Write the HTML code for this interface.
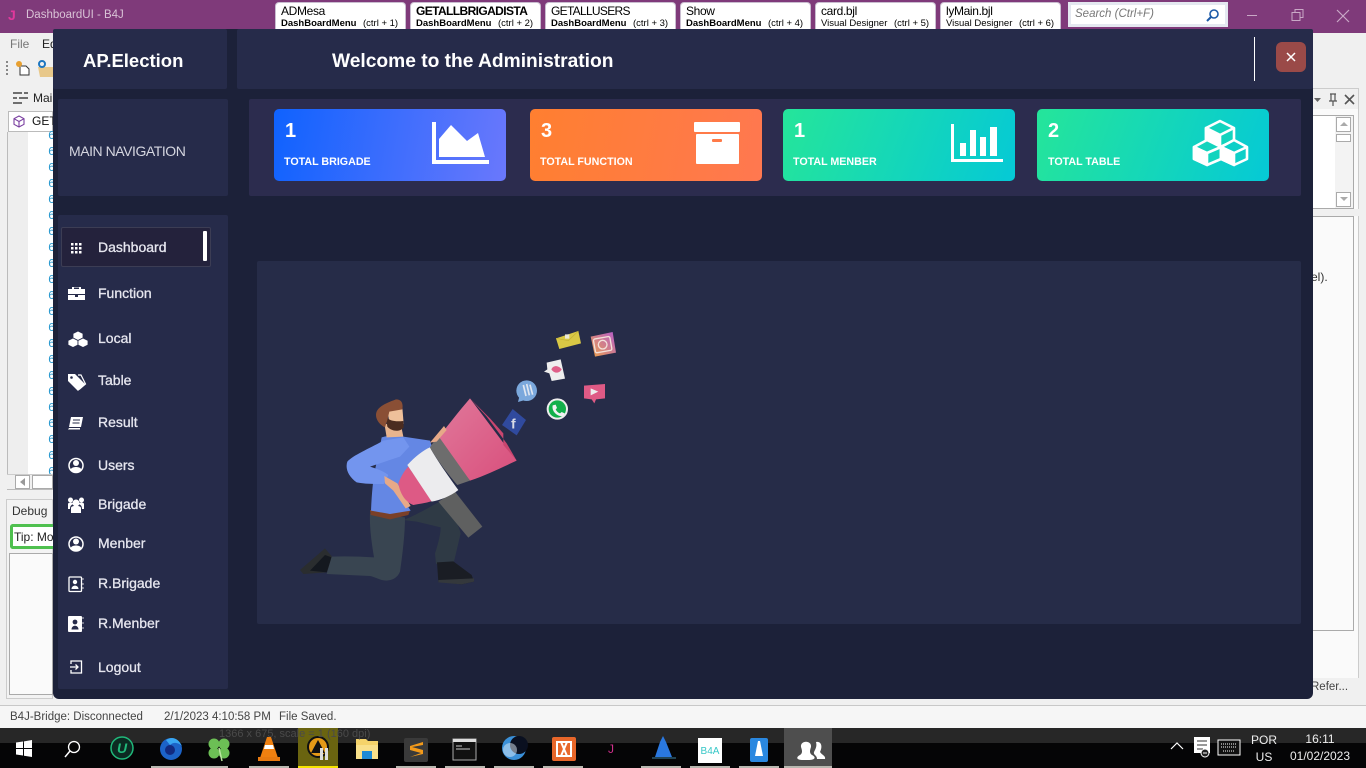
<!DOCTYPE html>
<html lang="en"><head><meta charset="utf-8"><title>DashboardUI - B4J</title>
<style>
html,body{margin:0;padding:0;width:1366px;height:768px;overflow:hidden;background:#f0f0f0;font-family:"Liberation Sans",sans-serif}
div,span,svg{position:absolute}
.t{white-space:nowrap;line-height:1}
.tab{background:#fff;border:1px solid #c9bdd0;border-bottom:0;border-radius:4px 4px 0 0;top:2px;height:27px;box-sizing:border-box;color:#000}
.tab b,.tab i{position:absolute;white-space:nowrap;font-style:normal;line-height:1}
.tab .a{left:5px;top:2px;font-size:12px;letter-spacing:-.35px}
.tab .b{left:5px;top:16px;font-size:9.5px;font-weight:bold}
.tab .c{top:16px;font-size:9.5px}
.p{background:#262b4a;border-radius:2px}
.card{top:109px;width:232px;height:72px;border-radius:5px}
.n{left:98px;color:#e6e6ef;font-size:14px;-webkit-text-stroke:.3px #e6e6ef}
.c1{left:10px;top:12px;font-size:20px;font-weight:bold;color:#fff}
.c2{left:10px;top:48px;font-size:10.7px;font-weight:bold;color:#fff}
.six{left:48px;color:#2a9ad0;font-size:12px;font-family:"Liberation Mono",monospace}
</style></head><body>

<!-- IDE background -->
<div style="left:0;top:0;width:1366px;height:33px;background:#7f3a7a"></div>
<div class="t" style="left:8px;top:8px;color:#e0389c;font-size:14px;font-weight:bold">J</div>
<div class="t" style="left:26px;top:10px;color:#d9c3d6;font-size:11.5px">DashboardUI - B4J</div>

<div class="tab" style="left:275px;width:131px"><i class="a">ADMesa</i><b class="b">DashBoardMenu</b><i class="c" style="left:87px">(ctrl + 1)</i></div>
<div class="tab" style="left:410px;width:131px"><b class="a" style="letter-spacing:-.6px">GETALLBRIGADISTA</b><b class="b">DashBoardMenu</b><i class="c" style="left:87px">(ctrl + 2)</i></div>
<div class="tab" style="left:545px;width:131px"><i class="a" style="letter-spacing:-.7px">GETALLUSERS</i><b class="b">DashBoardMenu</b><i class="c" style="left:87px">(ctrl + 3)</i></div>
<div class="tab" style="left:680px;width:131px"><i class="a">Show</i><b class="b">DashBoardMenu</b><i class="c" style="left:87px">(ctrl + 4)</i></div>
<div class="tab" style="left:815px;width:121px"><i class="a">card.bjl</i><i class="c" style="left:5px;top:16px">Visual Designer</i><i class="c" style="left:78px">(ctrl + 5)</i></div>
<div class="tab" style="left:940px;width:121px"><i class="a">lyMain.bjl</i><i class="c" style="left:5px;top:16px">Visual Designer</i><i class="c" style="left:78px">(ctrl + 6)</i></div>

<div style="left:1068px;top:2px;width:160px;height:25px;background:#fff;border:3px solid #e4e8f0;box-sizing:border-box"></div>
<div class="t" style="left:1075px;top:9px;font-size:11.5px;font-style:italic;color:#777">Search (Ctrl+F)</div>
<svg style="left:1205px;top:8px" width="15" height="15" viewBox="0 0 15 15"><circle cx="9" cy="6" r="4" fill="none" stroke="#1d5aa8" stroke-width="1.6"/><path d="M6 9L2 13" stroke="#1d5aa8" stroke-width="2"/></svg>
<svg style="left:1240px;top:6px" width="126" height="20" viewBox="0 0 126 20"><path d="M7 9.500H17" stroke="#c9a8c6"/><path d="M52 6.500H60V14.500H52ZM55 6.500V3.500H63V11.500H60" fill="none" stroke="#c9a8c6"/><path d="M97 4L109 16M109 4L97 16" stroke="#c9a8c6" stroke-width="1.2"/></svg>

<div class="t" style="left:10px;top:38px;font-size:12px;color:#777">File</div>
<div class="t" style="left:42px;top:38px;font-size:12px;color:#222">Ed</div>
<svg style="left:4px;top:58px" width="50" height="20" viewBox="0 0 50 20"><path d="M3 3V17" stroke="#888" stroke-width="2" stroke-dasharray="2 2"/><path d="M16 8H22L25 11V17H16Z" fill="#fff" stroke="#333"/><circle cx="15" cy="6" r="3" fill="#e8a030"/><path d="M34 9H50V19H36Z" fill="#e8c88a"/><circle cx="38" cy="6" r="3" fill="none" stroke="#1d76c0" stroke-width="2"/></svg>
<svg style="left:12px;top:91px" width="18" height="14" viewBox="0 0 18 14"><path d="M1 2H10M12 2H16M1 7H5M7 7H16M1 12H10" stroke="#444" stroke-width="1.4"/></svg>
<div class="t" style="left:33px;top:92px;font-size:12px;color:#222">Mai</div>
<div style="left:8px;top:111px;width:45px;height:21px;background:#fff;border:1px solid #bbb;box-sizing:border-box"></div>
<svg style="left:13px;top:115px" width="12" height="13" viewBox="0 0 12 13"><path d="M6 1L11 3.700V9.300L6 12L1 9.300V3.700ZM1 3.700L6 6.500L11 3.700M6 6.500V12" fill="none" stroke="#7a3fa0" stroke-width="1.100"/></svg>
<div class="t" style="left:32px;top:115px;font-size:12px;color:#111">GET</div>
<div style="left:8px;top:132px;width:20px;height:342px;background:#eee"></div>
<div style="left:28px;top:132px;width:25px;height:342px;background:#fff"></div>
<div class="t six" style="top:130px">6</div><div class="t six" style="top:146px">6</div><div class="t six" style="top:162px">6</div><div class="t six" style="top:178px">6</div><div class="t six" style="top:194px">6</div><div class="t six" style="top:210px">6</div><div class="t six" style="top:226px">6</div><div class="t six" style="top:242px">6</div><div class="t six" style="top:258px">6</div><div class="t six" style="top:274px">6</div><div class="t six" style="top:290px">6</div><div class="t six" style="top:306px">6</div><div class="t six" style="top:322px">6</div><div class="t six" style="top:338px">6</div><div class="t six" style="top:354px">6</div><div class="t six" style="top:370px">6</div><div class="t six" style="top:386px">6</div><div class="t six" style="top:402px">6</div><div class="t six" style="top:418px">6</div><div class="t six" style="top:434px">6</div><div class="t six" style="top:450px">6</div><div class="t six" style="top:466px;height:8px;overflow:hidden">6</div>
<div style="left:7px;top:132px;width:1px;height:358px;background:#bbb"></div>
<div style="left:7px;top:474px;width:46px;height:16px;background:#f0f0f0;border-top:1px solid #ccc;border-bottom:1px solid #bbb;box-sizing:border-box"></div>
<div style="left:15px;top:475px;width:15px;height:14px;background:#fff;border:1px solid #aaa;box-sizing:border-box"></div>
<svg style="left:20px;top:478px" width="6" height="8" viewBox="0 0 6 8"><path d="M5 0V8L0 4Z" fill="#999"/></svg>
<div style="left:32px;top:475px;width:21px;height:14px;background:#fff;border:1px solid #aaa;box-sizing:border-box"></div>

<div style="left:6px;top:499px;width:47px;height:200px;background:#f3f3f3;border:1px solid #ccc;box-sizing:border-box"></div>
<div class="t" style="left:12px;top:505px;font-size:12px;color:#333">Debug</div>
<div style="left:10px;top:524px;width:43px;height:25px;background:#fff;border:3px solid #4fc04f;border-right:0;border-radius:3px 0 0 3px;box-sizing:border-box"></div>
<div class="t" style="left:14px;top:531px;font-size:12px;color:#222">Tip: Mo</div>
<div style="left:9px;top:553px;width:44px;height:142px;background:#fafafa;border:1px solid #aaa;box-sizing:border-box"></div>

<div style="left:1313px;top:88px;width:46px;height:590px;background:#fafafa;border-right:1px solid #ccc;border-top:1px solid #ccc;box-sizing:border-box"></div>
<div style="left:1313px;top:89px;width:45px;height:20px;background:#f0f0f0"></div>
<svg style="left:1313px;top:92px" width="45" height="15" viewBox="0 0 45 15"><path d="M1 6H8L4.500 10Z" fill="#666"/><path d="M17 2H23M18 2V9H22V2M16 9H24M20 9V14" fill="none" stroke="#555" stroke-width="1.200"/><path d="M32 3L41 12M41 3L32 12" stroke="#555" stroke-width="1.600"/></svg>
<div style="left:1313px;top:115px;width:41px;height:94px;background:#fff;border:1px solid #aaa;border-left:0;box-sizing:border-box"></div>
<div style="left:1335px;top:116px;width:18px;height:92px;background:#f3f3f3"></div>
<div style="left:1336px;top:117px;width:15px;height:15px;background:#fff;border:1px solid #aaa;box-sizing:border-box"></div>
<div style="left:1336px;top:134px;width:15px;height:8px;background:#fff;border:1px solid #aaa;box-sizing:border-box"></div>
<div style="left:1336px;top:192px;width:15px;height:15px;background:#fff;border:1px solid #aaa;box-sizing:border-box"></div>
<svg style="left:1339px;top:120px" width="10" height="85" viewBox="0 0 10 85"><path d="M1 6H9L5 2ZM1 77H9L5 81Z" fill="#aaa"/></svg>
<div style="left:1313px;top:209px;width:46px;height:7px;background:#f0f0f0"></div>
<div style="left:1313px;top:216px;width:41px;height:415px;background:#fafafa;border:1px solid #aaa;border-left:0;box-sizing:border-box"></div>
<div class="t" style="left:1311px;top:271px;font-size:12px;color:#333">el).</div>
<div style="left:1313px;top:678px;width:53px;height:28px;background:#f0f0f0"></div>
<div class="t" style="left:1311px;top:682px;font-size:11.5px;color:#444">Refer...</div>

<div style="left:0;top:699px;width:1366px;height:7px;background:#f0f0f0"></div>
<div style="left:0;top:705px;width:1366px;height:1px;background:#c8c8c8"></div>
<div style="left:0;top:706px;width:1366px;height:22px;background:#f6f6f6"></div>
<div class="t" style="left:10px;top:712px;font-size:11.5px;color:#444">B4J-Bridge: Disconnected</div>
<div class="t" style="left:164px;top:712px;font-size:11.5px;color:#444">2/1/2023 4:10:58 PM</div>
<div class="t" style="left:279px;top:712px;font-size:11.5px;color:#444">File Saved.</div>

<!-- Taskbar -->
<div style="left:0;top:728px;width:1366px;height:40px;background:#050506"></div>
<div style="left:0;top:728px;width:1366px;height:15px;background:#272727"></div>
<svg style="left:0;top:728px" width="1366" height="40" viewBox="0 0 1366 40">
<rect x="298" y="0" width="40" height="40" fill="#6a6410"/>
<rect x="784" y="0" width="48" height="40" fill="#4e4e4e"/>
<g fill="#b8b8b0"><rect x="151" y="38" width="40" height="2"/><rect x="187" y="38" width="41" height="2"/><rect x="249" y="38" width="40" height="2"/><rect x="396" y="38" width="40" height="2"/><rect x="445" y="38" width="40" height="2"/><rect x="494" y="38" width="40" height="2"/><rect x="543" y="38" width="40" height="2"/><rect x="641" y="38" width="40" height="2"/><rect x="690" y="38" width="40" height="2"/><rect x="739" y="38" width="40" height="2"/><rect x="784" y="38" width="48" height="2"/></g>
<rect x="298" y="38" width="40" height="2" fill="#f5e400"/>
<path d="M16 14.500L23 13.500V20H16ZM24 13.400L32 12V20H24ZM16 21H23V27.500L16 26.500ZM24 21H32V29L24 27.700Z" fill="#fff"/>
<circle cx="74" cy="19" r="5.500" fill="none" stroke="#fff" stroke-width="1.300"/><path d="M70 23L65 29" stroke="#fff" stroke-width="1.500"/>
<circle cx="122" cy="20" r="11" fill="#0c2a22" stroke="#20b87a" stroke-width="1.500"/>
<text x="122" y="25" text-anchor="middle" font-size="14" font-style="italic" font-weight="bold" fill="#20b87a" font-family="Liberation Sans">U</text>
<circle cx="171" cy="21" r="11" fill="#1c63c8"/><path d="M166 12C172 8 178 10 182 18C178 14 173 14 170 17Z" fill="#39a6f2"/><circle cx="170" cy="22" r="5" fill="#122a80"/>
<g fill="#6cbf55"><circle cx="214" cy="16" r="5.500"/><circle cx="224" cy="16" r="5.500"/><circle cx="214" cy="25" r="5.500"/><circle cx="224" cy="25" r="5.500"/></g><path d="M219 20L222 33" stroke="#b9e6a0" stroke-width="1.500"/>
<path d="M267 9H271L278 30H260Z" fill="#f08010"/><path d="M265 17H273L274 21H264Z" fill="#fff"/><path d="M258 29H280V33H258Z" fill="#e87a10"/>
<circle cx="318" cy="19" r="10" fill="#e59a17" stroke="#111" stroke-width="2"/><path d="M318 12L325 25H311Z" fill="#111"/><rect x="320" y="20" width="3" height="12" fill="#ddd"/><rect x="325" y="20" width="3" height="12" fill="#ddd"/>
<path d="M356 11H366L368 13H378V31H356Z" fill="#f5d36a"/><path d="M356 17H378V31H356Z" fill="#f9e08a"/><rect x="362" y="23" width="10" height="8" fill="#1e8ad6"/>
<rect x="404" y="10" width="24" height="24" rx="2" fill="#3a3a3a"/><path d="M423 14L410 18V22L421 25L410 29L423 26V22L412 19L423 17Z" fill="#f39a1a"/>
<rect x="453" y="11" width="23" height="21" fill="#111" stroke="#aaa"/><rect x="453" y="11" width="23" height="3" fill="#ddd"/><path d="M456 18H462M456 21H470" stroke="#ccc"/>
<circle cx="514" cy="20" r="12" fill="#3a90d8"/><circle cx="519" cy="17" r="9" fill="#0a1020"/><circle cx="510" cy="22" r="7" fill="#dfeefa" opacity=".5"/>
<rect x="552" y="9" width="24" height="24" rx="2" fill="#e8672a"/><path d="M557 14H571V28H557Z" fill="none" stroke="#fff" stroke-width="2"/><path d="M561 14L567 28M567 14L561 28" stroke="#fff" stroke-width="2"/>
<text x="611" y="25" text-anchor="middle" font-size="12" fill="#d0308c" font-family="Liberation Sans">J</text>
<path d="M655 29L660 14L663 8L666 14L672 29Z" fill="#2a78e0"/><rect x="652" y="29" width="24" height="2" fill="#245"/>
<rect x="698" y="10" width="24" height="25" fill="#fff"/><text x="710" y="26" text-anchor="middle" font-size="10" fill="#36c7c7" font-family="Liberation Sans">B4A</text>
<rect x="750" y="10" width="18" height="24" rx="2" fill="#2a88e0"/><path d="M758 13H760L763 28H755Z" fill="#fff"/>
<path d="M803 32C796 32 796 29 800 27C803 25 802 22 801 19C800 12 812 12 811 19C810 22 809 25 812 27C816 29 816 32 808 32Z" fill="#fff"/><path d="M816 14C821 13 823 18 820 24C822 27 826 28 825 31H817C817 27 813 27 814 24C816 20 817 18 816 14Z" fill="#fff"/>
<path d="M1171 21L1177 15L1183 21" fill="none" stroke="#fff" stroke-width="1.200"/>
<rect x="1194" y="9" width="16" height="16" fill="#fff"/><path d="M1197 13H1207M1197 17H1207M1197 21H1203" stroke="#333"/><circle cx="1205" cy="25" r="4" fill="#222" stroke="#fff"/><path d="M1203 25H1207" stroke="#fff"/>
<rect x="1218" y="12" width="22" height="15" fill="#111" stroke="#fff"/><path d="M1221 16H1237M1221 19H1237M1223 23H1235" stroke="#fff" stroke-dasharray="1 1"/>
<text x="1264" y="16" text-anchor="middle" font-size="12" fill="#eee" font-family="Liberation Sans">POR</text>
<text x="1264" y="33" text-anchor="middle" font-size="12" fill="#eee" font-family="Liberation Sans">US</text>
<text x="1320" y="15" text-anchor="middle" font-size="12" fill="#eee" font-family="Liberation Sans">16:11</text>
<text x="1320" y="32" text-anchor="middle" font-size="12" fill="#eee" font-family="Liberation Sans">01/02/2023</text>
<text x="219" y="9" font-size="11" fill="#4a4a4a" font-family="Liberation Sans">1366 x 675, scale = 1 (160 dpi)</text>
</svg>

<!-- App window -->
<div style="left:53px;top:29px;width:1260px;height:670px;background:#1c2139;border-radius:3px 3px 6px 6px"></div>
<div class="p" style="left:53px;top:29px;width:174px;height:60px"></div>
<div class="p" style="left:237px;top:29px;width:1076px;height:60px"></div>
<div class="t" style="left:83px;top:52px;font-size:18.500px;font-weight:bold;color:#fff">AP.Election</div>
<div class="t" style="left:332px;top:52px;font-size:19.200px;font-weight:bold;color:#fff">Welcome to the Administration</div>
<div style="left:1254px;top:37px;width:1px;height:44px;background:#fff"></div>
<div style="left:1276px;top:42px;width:30px;height:30px;border-radius:6px;background:#9a4a48"></div>
<svg style="left:1276px;top:42px" width="30" height="30" viewBox="0 0 30 30"><path d="M11 11L19 19M19 11L11 19" stroke="#fff" stroke-width="1.500"/></svg>

<div class="p" style="left:58px;top:99px;width:170px;height:97px"></div>
<div class="t" style="left:69px;top:144px;font-size:14px;letter-spacing:-.45px;color:#d5d6e0">MAIN NAVIGATION</div>

<div style="left:249px;top:99px;width:1052px;height:97px;background:#2c2c4e;border-radius:2px"></div>
<div class="card" style="left:274px;background:linear-gradient(100deg,#0f62fe,#6a78fc)"><div class="t c1" style="left:11px">1</div><div class="t c2">TOTAL BRIGADE</div></div>
<div class="card" style="left:530px;background:linear-gradient(100deg,#ff7f30,#ff7850)"><div class="t c1" style="left:11px">3</div><div class="t c2">TOTAL FUNCTION</div></div>
<div class="card" style="left:783px;background:linear-gradient(110deg,#25e59a,#05c9d6)"><div class="t c1" style="left:11px">1</div><div class="t c2">TOTAL MENBER</div></div>
<div class="card" style="left:1037px;background:linear-gradient(110deg,#25e59a,#05c9d6)"><div class="t c1" style="left:11px">2</div><div class="t c2" style="left:11px">TOTAL TABLE</div></div>

<svg style="left:0;top:0" width="1366" height="200" viewBox="0 0 1366 200">
<path d="M432 122H436V160H489V164H432Z" fill="#fff"/>
<path d="M439 139L451 125L467 141L478 133L485 157H439Z" fill="#fff"/>
<rect x="694" y="122" width="46" height="10" rx="1" fill="#fff"/>
<rect x="696" y="134" width="43" height="30" rx="1" fill="#fff"/>
<rect x="712" y="139" width="10" height="3" rx="1" fill="#ff7a48"/>
<path d="M951 124H954V159H1003V162H951Z" fill="#fff"/>
<rect x="960" y="143" width="6" height="13" fill="#fff"/><rect x="970" y="130" width="6" height="26" fill="#fff"/><rect x="980" y="137" width="6" height="19" fill="#fff"/><rect x="990" y="127" width="7" height="29" fill="#fff"/>
<g stroke="#fff" stroke-width="2.600" stroke-linejoin="round">
<path d="M1220 121L1234 128V141L1220 147L1206 141V128Z" fill="#13d4be"/>
<path d="M1206 128L1220 135V147L1206 141Z" fill="#fff"/><path d="M1206 128L1220 135L1234 128" fill="none"/>
<path d="M1207 140L1221 147V159L1207 165L1194 159V147Z" fill="#13d4be"/>
<path d="M1194 147L1207 153V165L1194 159Z" fill="#fff"/><path d="M1194 147L1207 153L1221 147" fill="none"/>
<path d="M1234 140L1247 147V159L1234 165L1221 159V147Z" fill="#0dcfc8"/>
<path d="M1221 147L1234 153V165L1221 159Z" fill="#fff"/><path d="M1221 147L1234 153L1247 147" fill="none"/>
</g>
</svg>

<!-- Sidebar -->
<div class="p" style="left:58px;top:215px;width:170px;height:474px"></div>
<div style="left:61px;top:227px;width:150px;height:40px;box-sizing:border-box;background:#24223c;border:1px solid #3c3d54;border-radius:2px"></div>
<div style="left:203px;top:231px;width:4px;height:30px;background:#fff;border-radius:1px"></div>
<div class="t n" style="top:240px">Dashboard</div>
<div class="t n" style="top:286px">Function</div>
<div class="t n" style="top:331px">Local</div>
<div class="t n" style="top:373px">Table</div>
<div class="t n" style="top:415px">Result</div>
<div class="t n" style="top:458px">Users</div>
<div class="t n" style="top:497px">Brigade</div>
<div class="t n" style="top:536px">Menber</div>
<div class="t n" style="top:576px">R.Brigade</div>
<div class="t n" style="top:616px">R.Menber</div>
<div class="t n" style="top:660px">Logout</div>

<svg style="left:60px;top:230px" width="34" height="450" viewBox="60 230 34 450">
<g fill="#fff"><rect x="71" y="243" width="2.500" height="2.500"/><rect x="75" y="243" width="2.500" height="2.500"/><rect x="79" y="243" width="2.500" height="2.500"/><rect x="71" y="247" width="2.500" height="2.500"/><rect x="75" y="247" width="2.500" height="2.500"/><rect x="79" y="247" width="2.500" height="2.500"/><rect x="71" y="251" width="2.500" height="2.500"/><rect x="75" y="251" width="2.500" height="2.500"/><rect x="79" y="251" width="2.500" height="2.500"/></g>
<path d="M72 289V287H81V289H85V294H68V289ZM74 287.500V289H79V287.500ZM68 295H75V297H78V295H85V300H68Z" fill="#fff" fill-rule="evenodd"/>
<g fill="#fff" stroke="#262b4a" stroke-width=".8"><path d="M78 331L83 333.500V338L78 340.500L73 338V333.500Z"/><path d="M73 338L78 340.500V345L73 347.500L68 345V340.500Z"/><path d="M83 338L88 340.500V345L83 347.500L78 345V340.500Z"/></g>
<path d="M68 374H75L85 384L78 391L68 381Z" fill="#fff"/><circle cx="71.500" cy="377.500" r="1.300" fill="#262b4a"/>
<path d="M78 375L81 375L85.500 384L79 389.500" fill="none" stroke="#fff" stroke-width="1.200"/>
<path d="M71 417H83L81 427H69ZM69 428H80L80 429.500H68Z" fill="#fff"/><path d="M73 420H80M72.500 423H79.500" stroke="#262b4a"/>
<circle cx="76" cy="465.500" r="7" fill="none" stroke="#fff" stroke-width="1.500"/><circle cx="76" cy="463" r="3" fill="#fff"/><path d="M70.500 470C71 466 81 466 81.500 470C79 473 73 473 70.500 470Z" fill="#fff"/>
<g fill="#fff"><circle cx="76" cy="503" r="3.500"/><circle cx="70.500" cy="500" r="2.500"/><circle cx="81.500" cy="500" r="2.500"/><path d="M71 513V508C71 505 81 505 81 508V513ZM68 504C68 502 73 502 73.500 504C71 505 70 506 70 509H68ZM84 504C84 502 79 502 78.500 504C81 505 82 506 82 509H84Z"/></g>
<circle cx="76" cy="544" r="7" fill="none" stroke="#fff" stroke-width="1.500"/><circle cx="76" cy="541.500" r="3" fill="#fff"/><path d="M70.500 548.500C71 544.500 81 544.500 81.500 548.500C79 551.500 73 551.500 70.500 548.500Z" fill="#fff"/>
<rect x="69" y="577" width="12.500" height="14.500" rx="1" fill="none" stroke="#fff" stroke-width="1.300"/><path d="M82.500 579H83.500M82.500 584H83.500M82.500 588H83.500" stroke="#fff" stroke-width="1.500"/><circle cx="75" cy="582" r="2.200" fill="#fff"/><path d="M71.500 589C71.500 584.500 78.500 584.500 78.500 589Z" fill="#fff"/>
<rect x="68" y="616" width="14" height="16" rx="1" fill="#fff"/><path d="M82.500 618H83.500M82.500 623H83.500M82.500 628H83.500" stroke="#fff" stroke-width="1.500"/><circle cx="75" cy="622" r="2.400" fill="#262b4a"/><path d="M71.500 629.500C71.500 624.500 78.500 624.500 78.500 629.500Z" fill="#262b4a"/>
<path d="M71 664V661H81.500V673H71V670" fill="none" stroke="#fff" stroke-width="1.300"/><path d="M70 667H78M75.500 664.500L78 667L75.500 669.500" fill="none" stroke="#fff" stroke-width="1.300"/>
</svg>

<!-- Hero panel -->
<div style="left:257px;top:261px;width:1044px;height:363px;background:#262c48;border-radius:2px"></div>
<svg style="left:290px;top:320px" width="340" height="270" viewBox="0 0 1020 810">
<defs>
<linearGradient id="cone" x1="0" y1="0" x2="1" y2="1"><stop offset="0" stop-color="#e0799b"/><stop offset="1" stop-color="#d94f7c"/></linearGradient>
<linearGradient id="ig" x1="0" y1="1" x2="1" y2="0"><stop offset="0" stop-color="#eda24a"/><stop offset="1" stop-color="#b55ccc"/></linearGradient>
</defs>
<path d="M30 750L105 685L128 712L110 757L40 762Z" fill="#2a2d2f"/>
<path d="M60 752L105 705L125 712L110 757Z" fill="#14181f"/>
<path d="M340 600C380 585 420 560 450 545C480 570 505 610 512 640L492 725L438 732L435 700C445 670 452 640 452 622L380 605Z" fill="#2f3a45"/>
<path d="M240 580L345 592C345 640 338 700 330 755C320 780 295 785 275 780C260 775 250 770 240 768L110 762L125 710C170 708 210 710 252 712C245 670 238 620 240 580Z" fill="#394551"/>
<path d="M441 727L490 724L545 765L552 785L515 793L445 785Z" fill="#1a1d24"/>
<path d="M445 780L552 775L552 785L515 793L445 787Z" fill="#34383c"/>
<path d="M240 570L360 572L355 585L300 598L242 585Z" fill="#7a4028"/>
<path d="M262 420L275 352C300 345 320 345 340 350L420 362L425 378L350 470L335 530L362 572L300 582L243 572C245 530 248 470 262 420Z" fill="#6487e4"/>
<path d="M280 362C240 385 190 405 172 425C165 445 175 470 200 487C225 492 255 492 282 492L295 465C275 450 255 445 240 440C270 430 300 420 330 410L358 380L340 352Z" fill="#7395ee"/>
<path d="M283 310L290 352L340 350L335 325Z" fill="#e8b48e"/>
<path d="M292 270L337 262L341 312L300 320Z" fill="#eec09a"/>
<path d="M288 290C300 305 320 305 340 303L341 322C330 337 305 335 292 320Z" fill="#4b2c20"/>
<path d="M258 285C258 262 285 250 318 238C335 238 340 250 337 268L298 275L292 300L285 322C270 315 258 300 258 285Z" fill="#8a4f35"/>
<path d="M283 468L322 490L362 558L347 565L310 512L285 490Z" fill="#e6a988"/>
<path d="M445 545L495 515L577 620L535 653Z" fill="#5f6060"/>
<path d="M325 490C335 465 345 450 355 440L427 543C405 550 385 552 370 555C345 545 330 520 325 490Z" fill="#dd5a85"/>
<path d="M352 435C375 410 400 390 420 382C440 420 480 475 505 510C480 530 450 540 425 545Z" fill="#ececee"/>
<path d="M440 360C470 320 510 270 540 235L680 422C630 445 590 465 540 482Z" fill="url(#cone)"/>
<path d="M420 382C430 365 440 355 448 352L540 482L502 495C480 470 440 420 420 382Z" fill="#6d6d6d"/>
<path d="M540 235L600 295L640 340L640 375L680 422L650 370L590 290Z" fill="#c9466f"/>
<path d="M420 368L462 318L470 330L440 365Z" fill="#e6a988"/>
<path d="M668 267L708 300L680 346L636 315Z" fill="#304a9e"/>
<text x="670" y="325" text-anchor="middle" font-size="42" font-weight="bold" fill="#d8dbe6" font-family="Liberation Sans">f</text>
<circle cx="710" cy="212" r="31" fill="#7ba8dc"/><path d="M688 230L684 246L705 240Z" fill="#7ba8dc"/>
<path d="M700 195L708 228M710 192L718 226M720 194L728 224" stroke="#e0e6f0" stroke-width="5"/>
<circle cx="802" cy="267" r="32" fill="#eeeeee"/><circle cx="802" cy="267" r="26" fill="#12b04a"/><path d="M788 256L797 254L801 264L797 268C800 274 804 278 810 280L815 276L824 280L821 288C805 292 784 276 788 256Z" fill="#f2f2f2"/>
<path d="M770 128L812 118L825 176L785 183L778 160L762 155L772 148Z" fill="#eeeeee"/><path d="M784 148C790 134 806 136 815 148C810 158 795 164 784 148Z" fill="#df5f88"/>
<path d="M882 197L945 192V235L918 238L913 250L905 238L882 235Z" fill="#df5a85"/><path d="M902 205L925 215L902 226Z" fill="#eee"/>
<path d="M798 55L865 33L873 70L808 87Z" fill="#d9c845"/><path d="M798 55L835 62L865 33" fill="none" stroke="#c2b135" stroke-width="2"/><rect x="825" y="43" width="13" height="13" fill="#eee" opacity=".85"/>
<path d="M902 50L968 36L978 98L915 110Z" fill="url(#ig)"/><rect x="913" y="53" width="50" height="42" rx="5" transform="rotate(-10 938 74)" fill="none" stroke="#f3e1d9" stroke-width="4"/><circle cx="938" cy="74" r="13" fill="none" stroke="#f3e1d9" stroke-width="4"/>
</svg>
</body></html>
